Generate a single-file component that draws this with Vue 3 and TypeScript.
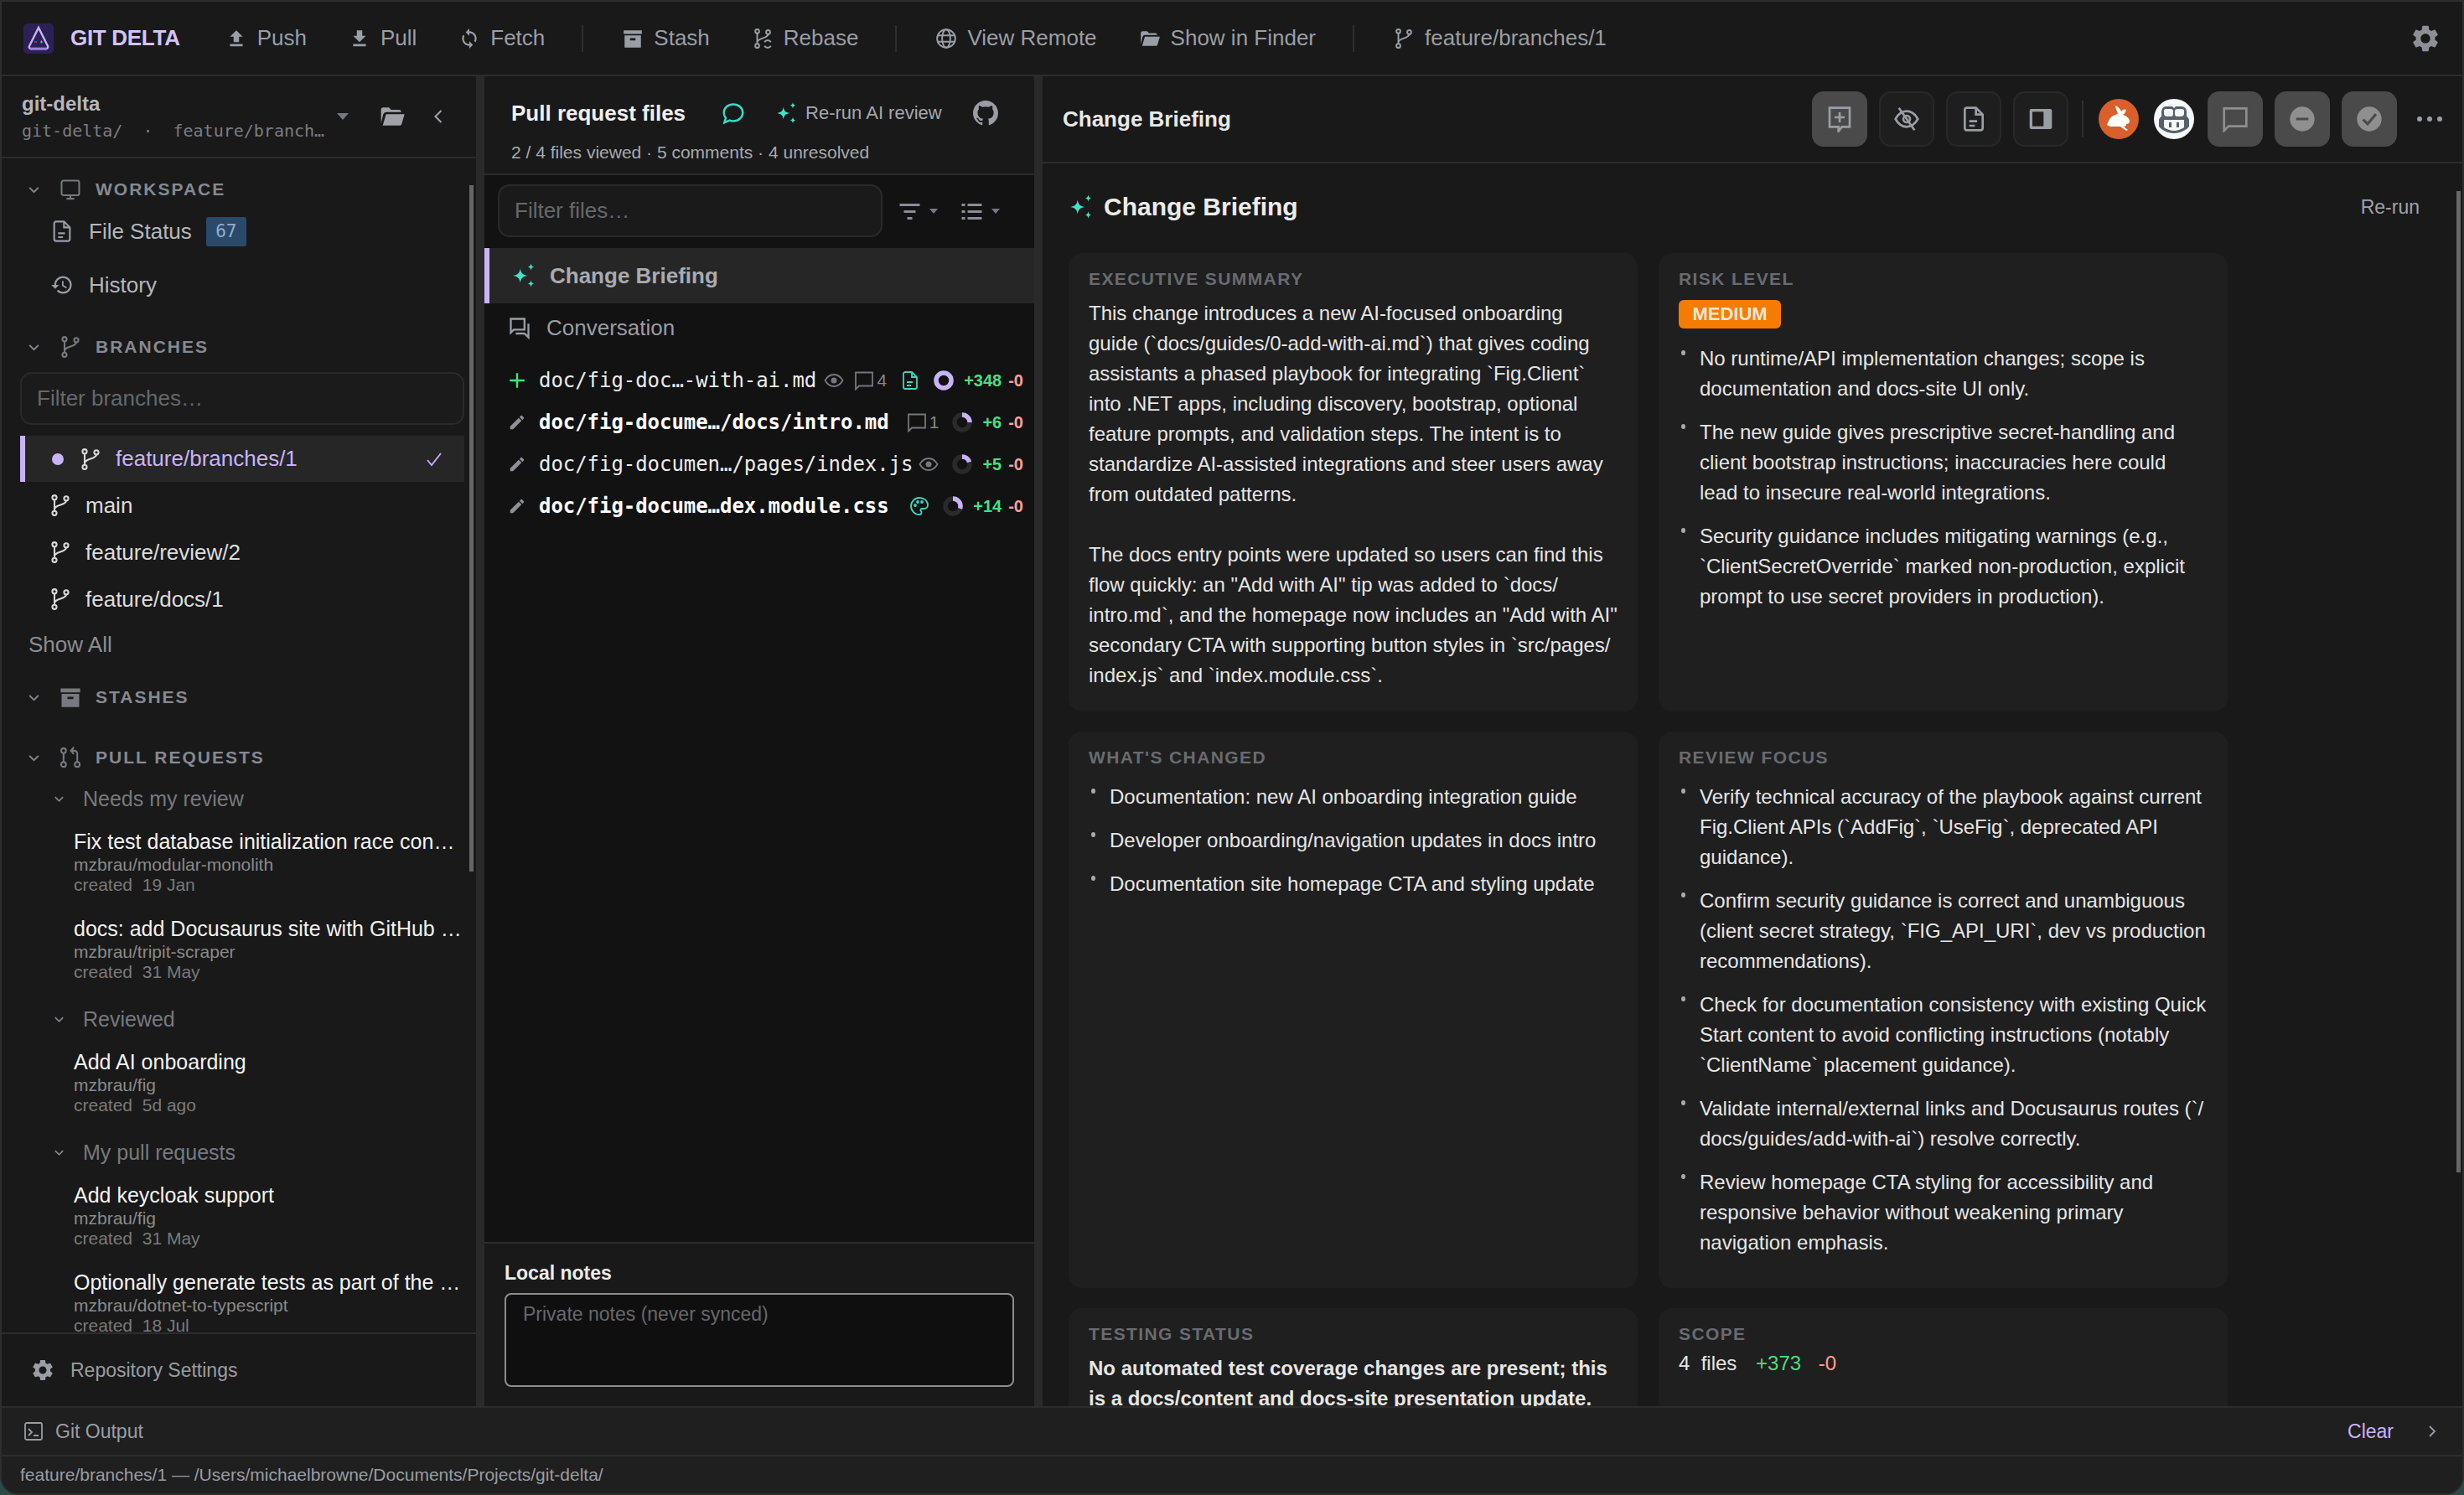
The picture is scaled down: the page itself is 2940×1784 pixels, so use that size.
<template>
  <div class="window">
    <header class="topbar">
      <svg class="logo" viewBox="0 0 36 36">
        <rect width="36" height="36" rx="5" fill="#2c2156" />
        <path d="M18 5 29 27a2 2 0 0 1-2 3H9a2 2 0 0 1-2-3Z" fill="none" stroke="#c9b3f7" stroke-width="2.4" />
        <rect x="8" y="29" width="20" height="2.6" fill="#9d7fe8" />
        <path d="M13 22h3" stroke="#e05a6a" stroke-width="1.2" />
        <path d="M20 22h3M21.500 20.500v3" stroke="#4ade80" stroke-width="1.2" />
      </svg>
      <span class="brand">GIT DELTA</span>
      <button class="tool first"><svg viewBox="0 0 24 24"><path :d="icons.push" /></svg>Push</button>
      <button class="tool"><svg viewBox="0 0 24 24"><path :d="icons.pull" /></svg>Pull</button>
      <button class="tool"><svg viewBox="0 0 24 24"><path :d="icons.sync" /></svg>Fetch</button>
      <i class="bar-sep"></i>
      <button class="tool"><svg viewBox="0 0 24 24"><path :d="icons.archive" /></svg>Stash</button>
      <button class="tool">
        <svg class="line" viewBox="0 0 24 24">
          <circle cx="6" cy="4" r="2.200" /><circle cx="6" cy="20" r="2.200" /><circle cx="18" cy="5" r="2.200" />
          <path d="M6 6.200v11.600M18 7.200c0 5-12 4-12 9M14 16a4 4 0 0 1 7 0M21 20a4 4 0 0 1-7 0" />
        </svg>Rebase
      </button>
      <i class="bar-sep"></i>
      <button class="tool">
        <svg class="line" viewBox="0 0 24 24">
          <circle cx="12" cy="12" r="10" /><ellipse cx="12" cy="12" rx="4.500" ry="10" /><path d="M2.500 8.500h19M2.500 15.500h19" />
        </svg>View Remote
      </button>
      <button class="tool"><svg viewBox="0 0 24 24"><path :d="icons.folder" /></svg>Show in Finder</button>
      <i class="bar-sep"></i>
      <button class="tool">
        <svg class="line" viewBox="0 0 24 24"><path :d="icons.branch" /><circle cx="6" cy="4" r="2.200" /><circle cx="6" cy="20" r="2.200" /><circle cx="18" cy="5" r="2.200" /></svg>feature/branches/1
      </button>
      <svg class="top-gear" viewBox="0 0 24 24"><path :d="icons.gear" /></svg>
    </header>

    <div class="panes">
      <aside class="sidebar">
        <div class="repo-head">
          <div class="repo-names">
            <strong>git-delta</strong>
            <span><em>git-delta/</em><em class="dot">·</em><em>feature/branch…</em></span>
          </div>
          <i class="caret"></i>
          <svg class="repo-folder" viewBox="0 0 24 24"><path :d="icons.folder" /></svg>
          <svg class="repo-back line" viewBox="0 0 12 24"><path d="M9 6 3 12l6 6" /></svg>
        </div>

        <div class="side-scroll">
          <div class="section-head first-head">
            <svg class="chev line" viewBox="0 0 14 14"><path d="M2 4.500 7 9.500 12 4.500" /></svg>
            <svg class="sec-icon line" viewBox="0 0 24 24"><rect x="3" y="3" width="18" height="15" rx="2" /><path d="M12 18v3M8 21.500h8" /></svg>
            WORKSPACE
          </div>
          <div class="nav-row">
            <svg class="nav-icon line" viewBox="0 0 24 24"><path :d="icons.doc" /><path d="M14 2v6h6M8 14h7M8 18h5" /></svg>
            File Status <b class="badge">67</b>
          </div>
          <div class="nav-row">
            <svg class="nav-icon" viewBox="0 0 24 24"><path :d="icons.history" /></svg>
            History
          </div>

          <div class="section-head branches-head">
            <svg class="chev line" viewBox="0 0 14 14"><path d="M2 4.500 7 9.500 12 4.500" /></svg>
            <svg class="sec-icon line" viewBox="0 0 24 24"><path :d="icons.branch" /><circle cx="6" cy="4" r="2.200" /><circle cx="6" cy="20" r="2.200" /><circle cx="18" cy="5" r="2.200" /></svg>
            BRANCHES
          </div>
          <div class="side-filter">Filter branches…</div>
          <div class="branch current">
            <i class="cur-dot"></i>
            <svg class="line" viewBox="0 0 24 24"><path :d="icons.branch" /><circle cx="6" cy="4" r="2.200" /><circle cx="6" cy="20" r="2.200" /><circle cx="18" cy="5" r="2.200" /></svg>
            <span>feature/branches/1</span>
            <svg class="check line" viewBox="0 0 20 20"><path d="M2 11 7 17 18 3" /></svg>
          </div>
          <div v-for="b in branches" :key="b" class="branch">
            <svg class="line" viewBox="0 0 24 24"><path :d="icons.branch" /><circle cx="6" cy="4" r="2.200" /><circle cx="6" cy="20" r="2.200" /><circle cx="18" cy="5" r="2.200" /></svg>
            <span>{{ b }}</span>
          </div>
          <div class="show-all">Show All</div>

          <div class="section-head stash-head">
            <svg class="chev line" viewBox="0 0 14 14"><path d="M2 4.500 7 9.500 12 4.500" /></svg>
            <svg class="sec-icon" viewBox="0 0 24 24"><path :d="icons.archive" /></svg>
            STASHES
          </div>
          <div class="section-head pr-head">
            <svg class="chev line" viewBox="0 0 14 14"><path d="M2 4.500 7 9.500 12 4.500" /></svg>
            <svg class="sec-icon line" viewBox="0 0 24 24">
              <circle cx="5" cy="5" r="2.500" /><circle cx="5" cy="19" r="2.500" /><circle cx="19" cy="19" r="2.500" />
              <path d="M5 7.500v9M19 16.500V8a3 3 0 0 0-3-3h-3M15.500 1.500 12.500 5l3 3.500" />
            </svg>
            PULL REQUESTS
          </div>
          <template v-for="group in prGroups" :key="group.name">
            <div class="pr-group">
              <svg class="chev-sm line" viewBox="0 0 14 14"><path d="M2 4.500 7 9.500 12 4.500" /></svg>
              {{ group.name }}
            </div>
            <div v-for="pr in group.items" :key="pr.title" class="pr-item">
              <div class="pr-title">{{ pr.title }}</div>
              <div class="pr-repo">{{ pr.repo }}</div>
              <div class="pr-date">created&nbsp; {{ pr.date }}</div>
            </div>
          </template>
          <i class="side-thumb"></i>
        </div>

        <div class="side-foot">
          <svg viewBox="0 0 24 24"><path :d="icons.gear" /></svg>
          Repository Settings
        </div>
      </aside>

      <section class="files">
        <div class="files-head">
          <div class="files-title">
            <strong>Pull request files</strong>
            <svg class="teal-chat" viewBox="0 0 24 24"><path d="M12 3.500c5 0 9 3.500 9 8s-4 8-9 8c-1.300 0-2.500-.2-3.500-.6L3.500 21l1.300-4.300A7.700 7.700 0 0 1 3 11.500c0-4.500 4-8 9-8Z" /></svg>
            <svg class="spark small" viewBox="0 0 28 32"><path :d="icons.spark" /></svg>
            <span class="rerun-ai">Re-run AI review</span>
            <svg class="gh" viewBox="0 0 16 16"><path :d="icons.github" /></svg>
          </div>
          <div class="files-sub">2 / 4 files viewed · 5 comments · 4 unresolved</div>
        </div>

        <div class="files-body">
          <div class="filter-row">
            <div class="file-filter">Filter files…</div>
            <svg class="fl-icon" viewBox="0 0 24 24"><path d="M0 3h24v3H0zM5 11h14v3H5zM9 19h6v3H9z" /></svg>
            <i class="caret small"></i>
            <svg class="fl-icon list" viewBox="0 0 24 24"><path d="M0 3h4v3H0zM7 3h17v3H7zM0 11h4v3H0zM7 11h17v3H7zM0 19h4v3H0zM7 19h17v3H7z" /></svg>
            <i class="caret small"></i>
          </div>

          <div class="tab active">
            <svg class="spark" viewBox="0 0 28 32"><path :d="icons.spark" /></svg>
            Change Briefing
          </div>
          <div class="tab convo">
            <svg class="line" viewBox="0 0 24 24"><path d="M3 3h14v11H6l-3 3ZM21 8v14l-4-4H8" /></svg>
            Conversation
          </div>

          <div class="file-list">
            <div v-for="f in fileRows" :key="f.name" class="file-row">
              <svg v-if="f.added" class="row-icon plus" viewBox="0 0 20 20"><path d="M10 2v16M2 10h16" /></svg>
              <svg v-else class="row-icon" viewBox="0 0 24 24"><path :d="icons.pencil" /></svg>
              <span class="file-name" :class="{ unread: f.unread }">{{ f.name }}</span>
              <span class="file-meta">
                <svg v-if="f.viewed" class="eye" viewBox="0 0 24 24">
                  <path d="M1.500 12C4 7.500 7.800 5 12 5s8 2.500 10.500 7c-2.500 4.500-6.300 7-10.500 7S4 16.500 1.500 12Z" />
                  <circle cx="12" cy="12" r="3.500" fill="#75777c" stroke="none" />
                </svg>
                <span v-if="f.comments" class="cmt">
                  <svg viewBox="0 0 24 24"><path d="M2 2.500h20v16H6l-4 4Z" /></svg>{{ f.comments }}
                </span>
                <svg v-if="f.kind === 'doc'" class="kind" viewBox="0 0 24 24"><path :d="icons.doc" /><path d="M14 2v6h6M8 14h7M8 18h5" /></svg>
                <svg v-if="f.kind === 'css'" class="kind" viewBox="0 0 24 24">
                  <path d="M12 2C6.500 2 2 6.500 2 12s4.500 10 10 10c1.500 0 2.500-1 2.500-2.300 0-1.500-1.200-1.800-1.200-3 0-1 .9-1.700 2-1.700h2.500c2.500 0 4.200-2 4.200-4.500C22 5.500 17.500 2 12 2Z" />
                  <circle cx="7" cy="11" r="1" fill="#3dd6c0" /><circle cx="10" cy="7" r="1" fill="#3dd6c0" /><circle cx="15" cy="7" r="1" fill="#3dd6c0" />
                </svg>
                <svg class="ring" viewBox="0 0 24 24">
                  <circle cx="12" cy="12" r="9" />
                  <circle class="ring-on" cx="12" cy="12" r="9" :stroke-dasharray="`${f.pct * 56.550} 56.550`" transform="rotate(-90 12 12)" />
                </svg>
                <b class="adds">+{{ f.adds }}</b>
                <b class="dels">-0</b>
              </span>
            </div>
          </div>
        </div>

        <div class="notes">
          <strong>Local notes</strong>
          <div class="notes-box">Private notes (never synced)</div>
        </div>
      </section>

      <main class="briefing">
        <div class="brief-head">
          <strong>Change Briefing</strong>
          <div class="actions">
            <span class="act on"><svg viewBox="0 0 24 24"><path class="s" d="M3 2h18v17h-7l-3 4v-4H3Z" /><path class="s" d="M12 6v9M7.500 10.500h9" /></svg></span>
            <span class="act"><svg viewBox="0 0 24 24"><path class="s" d="M2 12c2.500-4.500 6-7 10-7s7.500 2.500 10 7c-2.500 4.500-6 7-10 7s-7.500-2.500-10-7Z" /><circle class="s" cx="12" cy="12" r="3" /><path class="s" d="M5 2l14 20" /></svg></span>
            <span class="act"><svg viewBox="0 0 24 24"><path class="s" :d="icons.doc" /><path class="s" d="M14 2v6h6M8 14h7M8 18h5" /></svg></span>
            <span class="act"><svg viewBox="0 0 24 24"><rect x="2" y="3" width="20" height="18" rx="1.500" fill="#9a9da3" /><rect x="4.500" y="5.500" width="10" height="13" fill="#1e1e1e" /></svg></span>
            <i class="act-sep"></i>
            <svg class="avatar" viewBox="0 0 48 48">
              <circle cx="24" cy="24" r="24" fill="#d95f2b" />
              <path fill="#fff" d="M20 8c3 1 6 4 7 7 2-3 5-3 6-2-1 3-2 5-4 6 4 1 8 4 8 8 0 2-2 3-4 3 0 2-1 3-3 3l5 4-2 1-7-5H14l-4-2 1-3 1-1c1-5 6-8 11-9-1-4-3-7-3-10Z" />
            </svg>
            <svg class="avatar" viewBox="0 0 48 48">
              <circle cx="24" cy="24" r="24" fill="#f6f8fa" />
              <path fill="#57606a" d="M15 9h7l2 2 2-2h7c4 0 6 3 6 7v5c2 1 3 3 3 5v7l-3 3c-4 3-10 5-15 5s-11-2-15-5l-3-3v-7c0-2 1-4 3-5v-5c0-4 2-7 6-7Z" />
              <path fill="#f6f8fa" d="M14 12h6c2 0 3 1 3 3v3c0 2-1 3-3 3h-4c-2 0-4-1-4-3v-4c0-1 1-2 2-2ZM28 12h6c1 0 2 1 2 2v4c0 2-2 3-4 3h-4c-2 0-3-1-3-3v-3c0-2 1-3 3-3ZM12 25h24v9c-3 2-8 4-12 4s-9-2-12-4Z" />
              <path fill="#57606a" d="M18 28h3v6h-3zM27 28h3v6h-3z" />
            </svg>
            <span class="act solid"><svg viewBox="0 0 24 24"><path class="s" d="M2 2.500h20v16H6l-4 4Z" /></svg></span>
            <span class="act solid"><svg viewBox="0 0 24 24"><circle cx="12" cy="12" r="11" fill="#8f8f8f" /><path d="M6.500 12h11" stroke="#4a4a4a" stroke-width="2.400" /></svg></span>
            <span class="act solid"><svg viewBox="0 0 24 24"><circle cx="12" cy="12" r="11" fill="#8f8f8f" /><path d="M6.500 12.500l4 4 7.500-9" fill="none" stroke="#4a4a4a" stroke-width="2.400" /></svg></span>
            <span class="more"><i></i><i></i><i></i></span>
          </div>
        </div>

        <div class="brief-scroll">
          <div class="brief-title">
            <svg class="spark" viewBox="0 0 28 32"><path :d="icons.spark" /></svg>
            <strong>Change Briefing</strong>
            <span>Re-run</span>
          </div>

          <div class="cards">
            <article class="card">
              <h4>EXECUTIVE SUMMARY</h4>
              <p class="para">This change introduces a new AI-focused onboarding guide (`docs/guides/0-add-with-ai.md`) that gives coding assistants a phased playbook for integrating `Fig.Client` into .NET apps, including discovery, bootstrap, optional feature prompts, and validation steps. The intent is to standardize AI-assisted integrations and steer users away from outdated patterns.</p>
              <p class="para">The docs entry points were updated so users can find this flow quickly: an "Add with AI" tip was added to `docs/<br />intro.md`, and the homepage now includes an "Add with AI" secondary CTA with supporting button styles in `src/pages/<br />index.js` and `index.module.css`.</p>
            </article>
            <article class="card">
              <h4>RISK LEVEL</h4>
              <span class="level">MEDIUM</span>
              <ul>
                <li v-for="t in riskItems" :key="t">{{ t }}</li>
              </ul>
            </article>
            <article class="card">
              <h4>WHAT'S CHANGED</h4>
              <ul>
                <li v-for="t in changedItems" :key="t">{{ t }}</li>
              </ul>
            </article>
            <article class="card">
              <h4>REVIEW FOCUS</h4>
              <ul>
                <li v-for="t in focusItems" :key="t">{{ t }}</li>
              </ul>
            </article>
            <article class="card">
              <h4>TESTING STATUS</h4>
              <p class="para testing">No automated test coverage changes are present; this is a docs/content and docs-site presentation update.</p>
            </article>
            <article class="card">
              <h4>SCOPE</h4>
              <p class="scope">4&nbsp; files <b>+373</b> <i>-0</i></p>
            </article>
          </div>
          <i class="brief-thumb"></i>
        </div>
      </main>
    </div>

    <div class="output-bar">
      <svg class="line" viewBox="0 0 24 24"><rect x="2" y="2" width="20" height="20" rx="2" /><path d="M6 9l4 4-4 4M12 17h6" /></svg>
      Git Output
      <span class="clear">Clear</span>
      <svg class="out-chev line" viewBox="0 0 12 24"><path d="M3 6l6 6-6 6" /></svg>
    </div>
    <footer class="status">feature/branches/1 — /Users/michaelbrowne/Documents/Projects/git-delta/</footer>
  </div>
</template>

<script setup lang="ts">
interface PullRequest {
  title: string;
  repo: string;
  date: string;
}

interface FileRow {
  name: string;
  added?: boolean;
  unread?: boolean;
  viewed?: boolean;
  comments?: number;
  kind?: "doc" | "css";
  pct: number;
  adds: number;
}

const icons = {
  push: "M9 16h6v-6h4l-7-7-7 7h4zm-4 2h14v2.500H5z",
  pull: "M19 9h-4V3H9v6H5l7 7 7-7zM5 18v2.500h14V18H5z",
  sync: "M12 4V1L8 5l4 4V6c3.310 0 6 2.690 6 6 0 1.010-.25 1.970-.7 2.800l1.460 1.460C19.540 15.030 20 13.570 20 12c0-4.420-3.580-8-8-8zm0 14c-3.310 0-6-2.690-6-6 0-1.010.25-1.970.7-2.800L5.240 7.740C4.460 8.970 4 10.430 4 12c0 4.420 3.580 8 8 8v3l4-4-4-4v3z",
  archive: "M2 3h20v4H2zM3 8.500h18V22H3zM9 11.500v2.500h6v-2.500z",
  folder: "M4 4h5l2 2h7a2 2 0 0 1 2 2H7a3 3 0 0 0-3 2l-2 8V6a2 2 0 0 1 2-2zM6.500 10H23l-2.600 9a1.500 1.500 0 0 1-1.500 1H3.500z",
  branch: "M6 6.200v11.600M18 7.200c0 5-12 3.800-12 9",
  gear: "M19.140 12.940c.04-.3.06-.61.06-.94 0-.32-.02-.64-.07-.94l2.030-1.580c.18-.14.23-.41.12-.61l-1.920-3.320c-.12-.22-.37-.29-.59-.22l-2.390.96c-.5-.38-1.030-.7-1.620-.94l-.36-2.540c-.04-.24-.24-.41-.48-.41h-3.840c-.24 0-.43.17-.47.41l-.36 2.540c-.59.24-1.130.57-1.620.94l-2.390-.96c-.22-.08-.47 0-.59.22L2.740 8.870c-.12.21-.08.47.12.61l2.030 1.580c-.05.3-.09.63-.09.94s.02.64.07.94l-2.030 1.580c-.18.14-.23.41-.12.61l1.920 3.320c.12.22.37.29.59.22l2.390-.96c.5.38 1.030.7 1.620.94l.36 2.540c.05.24.24.41.48.41h3.840c.24 0 .44-.17.47-.41l.36-2.540c.59-.24 1.130-.56 1.620-.94l2.390.96c.22.08.47 0 .59-.22l1.920-3.320c.12-.22.07-.47-.12-.61l-2.010-1.580zM12 15.600c-1.980 0-3.600-1.620-3.600-3.600s1.620-3.600 3.600-3.600 3.600 1.620 3.600 3.600-1.620 3.600-3.600 3.600z",
  doc: "M14 2H6a2 2 0 0 0-2 2v16a2 2 0 0 0 2 2h12a2 2 0 0 0 2-2V8z",
  history: "M13 3a9 9 0 0 0-9 9H1l3.890 3.890.07.14L9 12H6c0-3.870 3.130-7 7-7s7 3.130 7 7-3.130 7-7 7c-1.930 0-3.680-.79-4.940-2.060l-1.420 1.420A8.954 8.954 0 0 0 13 21a9 9 0 0 0 0-18zm-1 5v5l4.280 2.540.72-1.210-3.500-2.080V8H12z",
  pencil: "M3 17.250V21h3.750L17.810 9.940l-3.750-3.750L3 17.250zM20.710 7.040a1 1 0 0 0 0-1.410l-2.340-2.340a1 1 0 0 0-1.410 0l-1.830 1.830 3.750 3.750 1.830-1.830z",
  spark: "M10 8c.8 5 2.500 7 8 8-5.500 1-7.200 3-8 8-.8-5-2.500-7-8-8 5.500-1 7.200-3 8-8ZM22 2c.4 2.500 1.200 3.400 3.500 4-2.300.6-3.100 1.500-3.500 4-.4-2.500-1.200-3.400-3.500-4 2.300-.6 3.100-1.500 3.500-4ZM22 21c.4 2.500 1.200 3.400 3.500 4-2.300.6-3.100 1.500-3.500 4-.4-2.500-1.200-3.400-3.500-4 2.300-.6 3.100-1.500 3.500-4Z",
  github: "M8 0C3.580 0 0 3.580 0 8c0 3.540 2.290 6.530 5.470 7.590.4.07.55-.17.55-.38 0-.19-.01-.82-.01-1.490-2.010.37-2.530-.49-2.690-.94-.09-.23-.48-.94-.82-1.130-.28-.15-.68-.52-.01-.53.630-.01 1.080.58 1.230.82.720 1.210 1.870.87 2.330.66.07-.52.28-.87.51-1.070-1.780-.2-3.640-.89-3.640-3.950 0-.87.31-1.590.82-2.150-.08-.2-.36-1.020.08-2.120 0 0 .67-.21 2.200.82.640-.18 1.320-.27 2-.27.680 0 1.360.09 2 .27 1.530-1.040 2.200-.82 2.200-.82.44 1.100.16 1.920.08 2.120.51.56.82 1.270.82 2.150 0 3.070-1.870 3.750-3.650 3.950.29.25.54.73.54 1.480 0 1.070-.01 1.930-.01 2.200 0 .21.15.46.55.38A8.013 8.013 0 0 0 16 8c0-4.420-3.580-8-8-8z",
};

const branches = ["main", "feature/review/2", "feature/docs/1"];

const prGroups: { name: string; items: PullRequest[] }[] = [
  {
    name: "Needs my review",
    items: [
      { title: "Fix test database initialization race con…", repo: "mzbrau/modular-monolith", date: "19 Jan" },
      { title: "docs: add Docusaurus site with GitHub …", repo: "mzbrau/tripit-scraper", date: "31 May" },
    ],
  },
  {
    name: "Reviewed",
    items: [{ title: "Add AI onboarding", repo: "mzbrau/fig", date: "5d ago" }],
  },
  {
    name: "My pull requests",
    items: [
      { title: "Add keycloak support", repo: "mzbrau/fig", date: "31 May" },
      { title: "Optionally generate tests as part of the …", repo: "mzbrau/dotnet-to-typescript", date: "18 Jul" },
    ],
  },
];

const fileRows: FileRow[] = [
  { name: "doc/fig-doc…-with-ai.md", added: true, viewed: true, comments: 4, kind: "doc", pct: 1, adds: 348 },
  { name: "doc/fig-docume…/docs/intro.md", unread: true, comments: 1, pct: 0.25, adds: 6 },
  { name: "doc/fig-documen…/pages/index.js", viewed: true, pct: 0.2, adds: 5 },
  { name: "doc/fig-docume…dex.module.css", unread: true, kind: "css", pct: 0.3, adds: 14 },
];

const riskItems = [
  "No runtime/API implementation changes; scope is documentation and docs-site UI only.",
  "The new guide gives prescriptive secret-handling and client bootstrap instructions; inaccuracies here could lead to insecure real-world integrations.",
  "Security guidance includes mitigating warnings (e.g., `ClientSecretOverride` marked non-production, explicit prompt to use secret providers in production).",
];

const changedItems = [
  "Documentation: new AI onboarding integration guide",
  "Developer onboarding/navigation updates in docs intro",
  "Documentation site homepage CTA and styling update",
];

const focusItems = [
  "Verify technical accuracy of the playbook against current Fig.Client APIs (`AddFig`, `UseFig`, deprecated API guidance).",
  "Confirm security guidance is correct and unambiguous (client secret strategy, `FIG_API_URI`, dev vs production recommendations).",
  "Check for documentation consistency with existing Quick Start content to avoid conflicting instructions (notably `ClientName` placement guidance).",
  "Validate internal/external links and Docusaurus routes (`/ docs/guides/add-with-ai`) resolve correctly.",
  "Review homepage CTA styling for accessibility and responsive behavior without weakening primary navigation emphasis.",
];
</script>

<style>
html,
body {
  margin: 0;
  background: #2c4a46;
}
</style>

<style scoped>
.window {
  width: 2940px;
  height: 1784px;
  box-sizing: border-box;
  display: flex;
  flex-direction: column;
  overflow: hidden;
  background: #191919;
  border: 2px solid #2e2e2e;
  border-bottom-left-radius: 22px;
  border-bottom-right-radius: 22px;
  color: #e8e8e8;
  font-family: "Liberation Sans", Arial, sans-serif;
}

svg {
  display: block;
  flex: none;
  fill: currentColor;
}

svg.line {
  fill: none;
  stroke: currentColor;
  stroke-width: 1.8;
}

/* top bar */
.topbar {
  height: 87px;
  flex: none;
  display: flex;
  align-items: center;
  padding-left: 26px;
  border-bottom: 2px solid #2c2c2c;
  box-sizing: content-box;
}

.logo {
  width: 36px;
  height: 36px;
}

.brand {
  margin-left: 20px;
  font-size: 26px;
  font-weight: 700;
  color: #d6c2ff;
  letter-spacing: -0.3px;
}

.tool {
  display: flex;
  align-items: center;
  gap: 12px;
  margin-left: 50px;
  padding: 0;
  border: 0;
  background: none;
  color: #9a9ea6;
  font: 26px "Liberation Sans", Arial, sans-serif;
}

.tool.first {
  margin-left: 54px;
}

.tool svg {
  width: 26px;
  height: 26px;
}

.bar-sep {
  width: 2px;
  height: 32px;
  margin-left: 44px;
  margin-right: -4px;
  background: #2e2e2e;
}

.top-gear {
  width: 38px;
  height: 38px;
  margin-left: auto;
  margin-right: 25px;
  color: #8c9096;
}

.panes {
  flex: 1;
  min-height: 0;
  display: flex;
  background: #2a2a2a;
  gap: 10px;
}

/* sidebar */
.sidebar {
  width: 566px;
  flex: none;
  display: flex;
  flex-direction: column;
  background: #191919;
}

.repo-head {
  height: 96px;
  flex: none;
  display: flex;
  align-items: center;
  padding-left: 24px;
  border-bottom: 2px solid #2c2c2c;
}

.repo-names {
  width: 376px;
  display: flex;
  flex-direction: column;
  gap: 6px;
}

.repo-names strong {
  font-size: 24px;
  color: #b5b7bb;
}

.repo-names span {
  font: 20px "DejaVu Sans Mono", monospace;
  color: #7b7d82;
  white-space: nowrap;
}

.repo-names em {
  font-style: normal;
}

.repo-names .dot {
  margin: 0 24px;
}

.caret {
  width: 0;
  height: 0;
  border-left: 7px solid transparent;
  border-right: 7px solid transparent;
  border-top: 8px solid #77797e;
}

.repo-folder {
  width: 32px;
  height: 32px;
  margin-left: 36px;
  color: #a0a2a7;
}

.repo-back {
  width: 14px;
  height: 28px;
  margin-left: 32px;
  color: #a0a2a7;
}

.side-scroll {
  position: relative;
  flex: 1;
  min-height: 0;
  overflow: hidden;
  padding-left: 22px;
  padding-right: 14px;
}

.section-head {
  height: 36px;
  display: flex;
  align-items: center;
  padding-left: 9px;
  font-size: 21px;
  font-weight: 700;
  letter-spacing: 2px;
  color: #868990;
}

.first-head {
  margin-top: 19px;
}

.branches-head {
  margin-top: 24px;
}

.stash-head {
  margin-top: 19px;
}

.pr-head {
  margin-top: 36px;
}

.chev {
  width: 15px;
  height: 15px;
  margin-right: 22px;
  color: #85878c;
}

.sec-icon {
  width: 28px;
  height: 28px;
  margin-right: 16px;
  color: #77797e;
}

.nav-row {
  height: 64px;
  display: flex;
  align-items: center;
  padding-left: 36px;
  font-size: 26px;
  color: #b4b7bc;
}

.nav-icon {
  width: 28px;
  height: 28px;
  margin-right: 18px;
  color: #9a9da3;
}

.badge {
  width: 48px;
  height: 35px;
  margin-left: 17px;
  display: flex;
  align-items: center;
  justify-content: center;
  border-radius: 3px;
  background: #2b4a6b;
  color: #8fb0cc;
  font: 400 21px "DejaVu Sans Mono", monospace;
}

.side-filter {
  height: 63px;
  margin-top: 12px;
  box-sizing: border-box;
  display: flex;
  align-items: center;
  padding-left: 18px;
  border: 2px solid #2a2a2a;
  border-radius: 14px;
  background: #1b1b1b;
  color: #66686c;
  font-size: 26px;
}

.branch {
  height: 56px;
  display: flex;
  align-items: center;
  padding-left: 34px;
  font-size: 26px;
  color: #dcdcdc;
}

.branch svg {
  width: 28px;
  height: 28px;
  margin-right: 16px;
  color: #d8d8d8;
}

.branch.current {
  height: 55px;
  margin-top: 13px;
  padding-left: 32px;
  border-left: 6px solid #c9b3f7;
  background: #262626;
  color: #c9b3f7;
}

.cur-dot {
  width: 14px;
  height: 14px;
  margin-right: 18px;
  border-radius: 50%;
  background: #c9b3f7;
}

.branch.current .check {
  width: 20px;
  height: 20px;
  margin-left: auto;
  margin-right: 26px;
  color: #c9b3f7;
}

.show-all {
  height: 52px;
  display: flex;
  align-items: center;
  padding-left: 10px;
  font-size: 26px;
  color: #8a8d93;
}

.pr-group {
  height: 41px;
  margin-top: 14px;
  display: flex;
  align-items: center;
  padding-left: 40px;
  font-size: 25px;
  color: #77797e;
}

.pr-head + .pr-group {
  margin-top: 11px;
}

.chev-sm {
  width: 13px;
  height: 13px;
  margin-right: 22px;
  color: #85878c;
}

.pr-item {
  height: 88px;
  padding: 16px 0 0 64px;
}

.pr-title {
  height: 29px;
  line-height: 29px;
  font-size: 25px;
  white-space: nowrap;
  color: #f2f2f2;
}

.pr-repo {
  height: 25px;
  line-height: 25px;
  font-size: 21px;
  color: #8a8a8a;
}

.pr-date {
  height: 23px;
  line-height: 23px;
  font-size: 21px;
  color: #7a7a7a;
}

.side-thumb {
  position: absolute;
  top: 32px;
  right: 3px;
  width: 5px;
  height: 819px;
  background: #666;
}

.side-foot {
  height: 86px;
  flex: none;
  display: flex;
  align-items: center;
  gap: 18px;
  padding-left: 34px;
  border-top: 2px solid #2c2c2c;
  font-size: 23px;
  color: #9a9da3;
}

.side-foot svg {
  width: 30px;
  height: 30px;
}

/* file panel */
.files {
  width: 656px;
  flex: none;
  display: flex;
  flex-direction: column;
  background: #191919;
}

.files-head {
  height: 118px;
  flex: none;
  box-sizing: border-box;
  padding: 26px 0 0 32px;
  border-bottom: 2px solid #2c2c2c;
}

.files-title {
  display: flex;
  align-items: center;
  height: 36px;
}

.files-title strong {
  font-size: 26px;
  color: #f0f0f0;
}

.teal-chat {
  width: 30px;
  height: 30px;
  margin-left: 42px;
  fill: none;
  stroke: #3dd6c0;
  stroke-width: 2;
}

.spark {
  width: 30px;
  height: 34px;
  color: #46e0c8;
}

.spark.small {
  width: 27px;
  height: 30px;
  margin-left: 35px;
}

.rerun-ai {
  margin-left: 9px;
  font-size: 22px;
  color: #a4a7ac;
}

.gh {
  width: 30px;
  height: 30px;
  margin-left: 37px;
  color: #9a9da3;
}

.files-sub {
  margin-top: 17px;
  font-size: 21px;
  color: #a8aaae;
}

.files-body {
  flex: 1;
  min-height: 0;
  background: #121212;
  padding-top: 11px;
}

.filter-row {
  display: flex;
  align-items: center;
  height: 63px;
  padding-left: 16px;
}

.file-filter {
  width: 459px;
  height: 63px;
  box-sizing: border-box;
  display: flex;
  align-items: center;
  padding-left: 18px;
  border: 2px solid #2a2a2a;
  border-radius: 14px;
  background: #1a1a1a;
  color: #66686c;
  font-size: 26px;
}

.fl-icon {
  width: 25px;
  height: 24px;
  margin-left: 20px;
  color: #8a8d93;
}

.fl-icon.list {
  margin-left: 28px;
}

.caret.small {
  margin-left: 11px;
  border-left-width: 5px;
  border-right-width: 5px;
  border-top-width: 6px;
}

.tab {
  display: flex;
  align-items: center;
  font-size: 26px;
}

.tab.active {
  height: 66px;
  margin-top: 13px;
  gap: 16px;
  padding-left: 26px;
  border-left: 6px solid #c9b3f7;
  background: #262626;
  font-weight: 700;
  color: #a8abb0;
}

.tab.convo {
  height: 58px;
  gap: 18px;
  padding-left: 28px;
  color: #9a9da3;
}

.tab.convo svg {
  width: 28px;
  height: 28px;
  stroke-width: 2;
}

.file-list {
  margin-top: 9px;
}

.file-row {
  height: 50px;
  display: flex;
  align-items: center;
  padding: 0 13px 0 28px;
}

.row-icon {
  width: 22px;
  height: 22px;
  margin-right: 15px;
  color: #8f9196;
}

.row-icon.plus {
  fill: none;
  stroke: #4ade80;
  stroke-width: 2.200;
}

.file-name {
  font: 24px "DejaVu Sans Mono", monospace;
  letter-spacing: -0.05px;
  white-space: nowrap;
  color: #ececec;
}

.file-name.unread {
  font-weight: 700;
  color: #fff;
}

.file-meta {
  margin-left: auto;
  display: flex;
  align-items: center;
  gap: 12px;
}

.eye {
  width: 24px;
  height: 24px;
  fill: none;
  stroke: #75777c;
  stroke-width: 1.800;
}

.cmt {
  display: flex;
  align-items: center;
  gap: 3px;
  font-size: 21px;
  color: #85878c;
}

.cmt svg {
  width: 24px;
  height: 24px;
  fill: none;
  stroke: #75777c;
  stroke-width: 1.800;
}

.kind {
  width: 24px;
  height: 24px;
  margin-left: 4px;
  fill: none;
  stroke: #3dd6c0;
  stroke-width: 1.800;
}

.ring {
  width: 24px;
  height: 24px;
  margin-left: 4px;
  fill: none;
  stroke: #2a2a2a;
  stroke-width: 5.500;
}

.ring-on {
  stroke: #c9b3f7;
}

.adds,
.dels {
  font-size: 20px;
}

.adds {
  color: #4ade80;
}

.dels {
  margin-left: -4px;
  color: #ff9f94;
}

.notes {
  height: 196px;
  flex: none;
  box-sizing: border-box;
  padding: 22px 24px 0;
  border-top: 2px solid #2c2c2c;
}

.notes strong {
  display: block;
  font-size: 23px;
  color: #ececec;
}

.notes-box {
  height: 112px;
  margin-top: 10px;
  box-sizing: border-box;
  padding: 10px 20px;
  border: 2px solid #8d8d8d;
  border-radius: 8px;
  background: #0f0f0f;
  font-size: 23px;
  color: #66686c;
}

/* main briefing */
.briefing {
  flex: 1;
  min-width: 0;
  display: flex;
  flex-direction: column;
  background: #191919;
}

.brief-head {
  height: 102px;
  flex: none;
  display: flex;
  align-items: center;
  padding-left: 24px;
  border-bottom: 2px solid #2c2c2c;
}

.brief-head strong {
  font-size: 26px;
  color: #e8e8e8;
}

.actions {
  margin-left: auto;
  display: flex;
  align-items: center;
  gap: 14px;
  padding-right: 28px;
}

.act {
  width: 66px;
  height: 66px;
  box-sizing: border-box;
  display: flex;
  align-items: center;
  justify-content: center;
  border: 2px solid #282828;
  border-radius: 14px;
  background: #1e1e1e;
}

.act.on,
.act.solid {
  border-color: #4a4a4a;
  background: #4a4a4a;
}

.act svg {
  width: 32px;
  height: 32px;
  fill: none;
}

.act .s {
  fill: none;
  stroke: #9a9da3;
  stroke-width: 2;
}

.act.solid .s {
  stroke: #8f8f8f;
}

.act-sep {
  width: 2px;
  height: 44px;
  margin: 0 2px;
  background: #2e2e2e;
}

.avatar {
  width: 48px;
  height: 48px;
  margin: 0 2px;
}

.more {
  display: flex;
  gap: 6px;
  margin-left: 10px;
  width: 26px;
}

.more i {
  width: 6px;
  height: 6px;
  flex: none;
  border-radius: 50%;
  background: #9a9da3;
}

.brief-scroll {
  position: relative;
  flex: 1;
  min-height: 0;
  overflow: hidden;
  padding: 33px 0 0 31px;
}

.brief-title {
  width: 1612px;
  height: 38px;
  display: flex;
  align-items: center;
  gap: 12px;
  margin-bottom: 36px;
}

.brief-title strong {
  font-size: 30px;
  color: #ececec;
}

.brief-title span {
  margin-left: auto;
  font-size: 23px;
  color: #a0a3a8;
}

.cards {
  display: grid;
  grid-template-columns: 679px 679px;
  column-gap: 25px;
  row-gap: 24px;
}

.card {
  padding: 20px 24px 20px;
  border-radius: 16px;
  background: #1f1f1f;
}

h4 {
  height: 22px;
  margin: 0;
  line-height: 22px;
  font-size: 21px;
  font-weight: 700;
  letter-spacing: 1.400px;
  color: #696b70;
}

.para {
  margin: 12px 0 36px;
  line-height: 36px;
  font-size: 24px;
  color: #e6e6e6;
}

.para + .para {
  margin-top: 0;
  margin-bottom: 5px;
}

.para.testing {
  margin-bottom: 0;
  font-weight: 700;
}

.level {
  display: block;
  width: 122px;
  height: 34px;
  margin-top: 14px;
  line-height: 34px;
  border-radius: 6px;
  background: #f57c00;
  color: #f6e6d6;
  font-size: 22px;
  font-weight: 700;
  text-align: center;
}

ul {
  margin: 18px 0 0;
  padding: 0;
  list-style: none;
}

li {
  position: relative;
  margin-bottom: 16px;
  padding-left: 25px;
  line-height: 36px;
  font-size: 24px;
  color: #e6e6e6;
}

li::before {
  content: "";
  position: absolute;
  left: 3px;
  top: 8px;
  width: 5px;
  height: 6px;
  border-radius: 50%;
  background: #aaa;
}

.scope {
  margin: 6px 0 0;
  line-height: 36px;
  font-size: 24px;
  color: #e6e6e6;
}

.scope b {
  margin-left: 16px;
  font-weight: 400;
  color: #4ade80;
}

.scope i {
  margin-left: 14px;
  font-style: normal;
  color: #ff9f94;
}

.brief-thumb {
  position: absolute;
  top: 33px;
  right: 2px;
  width: 5px;
  height: 1171px;
  background: #666;
}

/* bottom bars */
.output-bar {
  height: 56px;
  flex: none;
  display: flex;
  align-items: center;
  gap: 14px;
  padding-left: 26px;
  background: #1f1f1f;
  border-top: 2px solid #2c2c2c;
  font-size: 23px;
  color: #9a9da3;
}

.output-bar svg {
  width: 24px;
  height: 24px;
}

.clear {
  margin-left: auto;
  color: #c9b3f7;
}

.output-bar .out-chev {
  width: 12px;
  height: 24px;
  margin-left: 26px;
  margin-right: 30px;
}

.status {
  height: 46px;
  flex: none;
  box-sizing: border-box;
  display: flex;
  align-items: center;
  padding-left: 22px;
  background: #1f1f1f;
  border-top: 2px solid #2c2c2c;
  font-size: 21px;
  color: #9a9da3;
}
</style>
